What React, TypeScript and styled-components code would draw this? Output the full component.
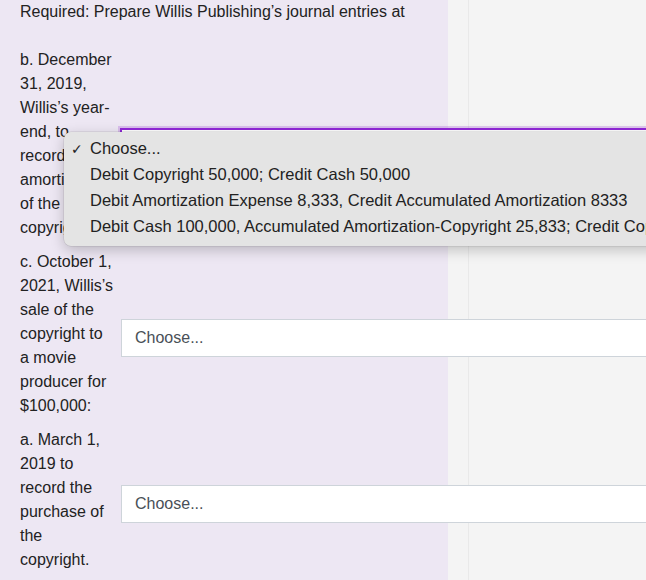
import React from "react";
import styled, { createGlobalStyle } from "styled-components";

const Global = createGlobalStyle`
  html, body { margin: 0; padding: 0; overflow: hidden; }
  body {
    font-family: "Liberation Sans", Arial, Helvetica, sans-serif;
    color: #222;
    background: #f4f4f4;
  }
`;

const Page = styled.div`
  display: flex;
  width: 646px;
  height: 580px;
  overflow: hidden;
`;

const LeftPanel = styled.div`
  position: relative;
  z-index: 1;
  flex: 0 0 448px;
  width: 448px;
  min-width: 0;
  box-sizing: border-box;
  padding: 0 0 0 20px;
  background: #ede7f3;
`;

const RightPanel = styled.div`
  flex: 1;
  min-width: 0;
  padding-left: 20px;
  background: #f4f4f4;
`;

const Rule = styled.div`
  height: 100%;
  border-left: 1px solid #e9e9e9;
`;

const Heading = styled.p`
  margin: 0 0 24px;
  font-size: 16px;
  line-height: 24px;
  white-space: nowrap;
`;

const Rows = styled.div`
  display: flex;
  flex-direction: column;
  gap: 10px;
`;

const Row = styled.div`
  display: flex;
  align-items: center;
  gap: 6px;
`;

const Label = styled.div`
  flex: 0 0 95px;
  font-size: 16px;
  line-height: 24px;
`;

const SelectWrap = styled.div`
  position: relative;
  margin-top: 7px;
`;

const Select = styled.div<{ $focused?: boolean }>`
  box-sizing: border-box;
  width: 580px;
  height: 38px;
  display: flex;
  align-items: center;
  padding: 0 13px;
  background: #fff;
  font-size: 16px;
  color: #495057;
  border: 1px solid ${(p) => (p.$focused ? "#9128d8" : "#ced4da")};
  box-shadow: ${(p) =>
    p.$focused ? "0 0 0 1px #9128d8, 0 0 0 3px rgba(145,40,216,0.22)" : "none"};
`;

const Menu = styled.ul`
  position: absolute;
  left: -57px;
  top: 3px;
  width: 640px;
  margin: 0;
  padding: 4px 0 6px;
  list-style: none;
  background: #e4e4e4;
  border-radius: 7px;
  box-shadow: 0 4px 14px rgba(0, 0, 0, 0.22), 0 0 0 0.5px rgba(0, 0, 0, 0.12);
  font-size: 16.5px;
  color: #222;
`;

const MenuItem = styled.li`
  display: flex;
  align-items: center;
  height: 26px;
  white-space: nowrap;
`;

const Check = styled.span`
  flex: 0 0 26px;
  box-sizing: border-box;
  padding-left: 7px;
  font-family: "DejaVu Sans", sans-serif;
  font-size: 14px;
`;

const options = [
  "Choose...",
  "Debit Copyright 50,000; Credit Cash 50,000",
  "Debit Amortization Expense 8,333, Credit Accumulated Amortization 8333",
  "Debit Cash 100,000, Accumulated Amortization-Copyright 25,833; Credit Copyright 50,000; Gain on Sale 75,833",
];

const rows = [
  {
    label: "b. December 31, 2019, Willis\u2019s year-end, to record amortization of the copyright",
    open: true,
  },
  {
    label: "c. October 1, 2021, Willis\u2019s sale of the copyright to a movie producer for $100,000:",
    open: false,
  },
  {
    label: "a. March 1, 2019 to record the purchase of the copyright.",
    open: false,
  },
];

export default function App() {
  return (
    <>
      <Global />
      <Page>
        <LeftPanel>
          <Heading>Required: Prepare Willis Publishing&rsquo;s journal entries at</Heading>
          <Rows>
            {rows.map((r, i) => (
              <Row key={i}>
                <Label>{r.label}</Label>
                <SelectWrap>
                  <Select $focused={r.open}>{r.open ? "" : "Choose..."}</Select>
                  {r.open && (
                    <Menu>
                      {options.map((o, j) => (
                        <MenuItem key={j}>
                          <Check>{j === 0 ? "\u2713" : ""}</Check>
                          {o}
                        </MenuItem>
                      ))}
                    </Menu>
                  )}
                </SelectWrap>
              </Row>
            ))}
          </Rows>
        </LeftPanel>
        <RightPanel>
          <Rule />
        </RightPanel>
      </Page>
    </>
  );
}
